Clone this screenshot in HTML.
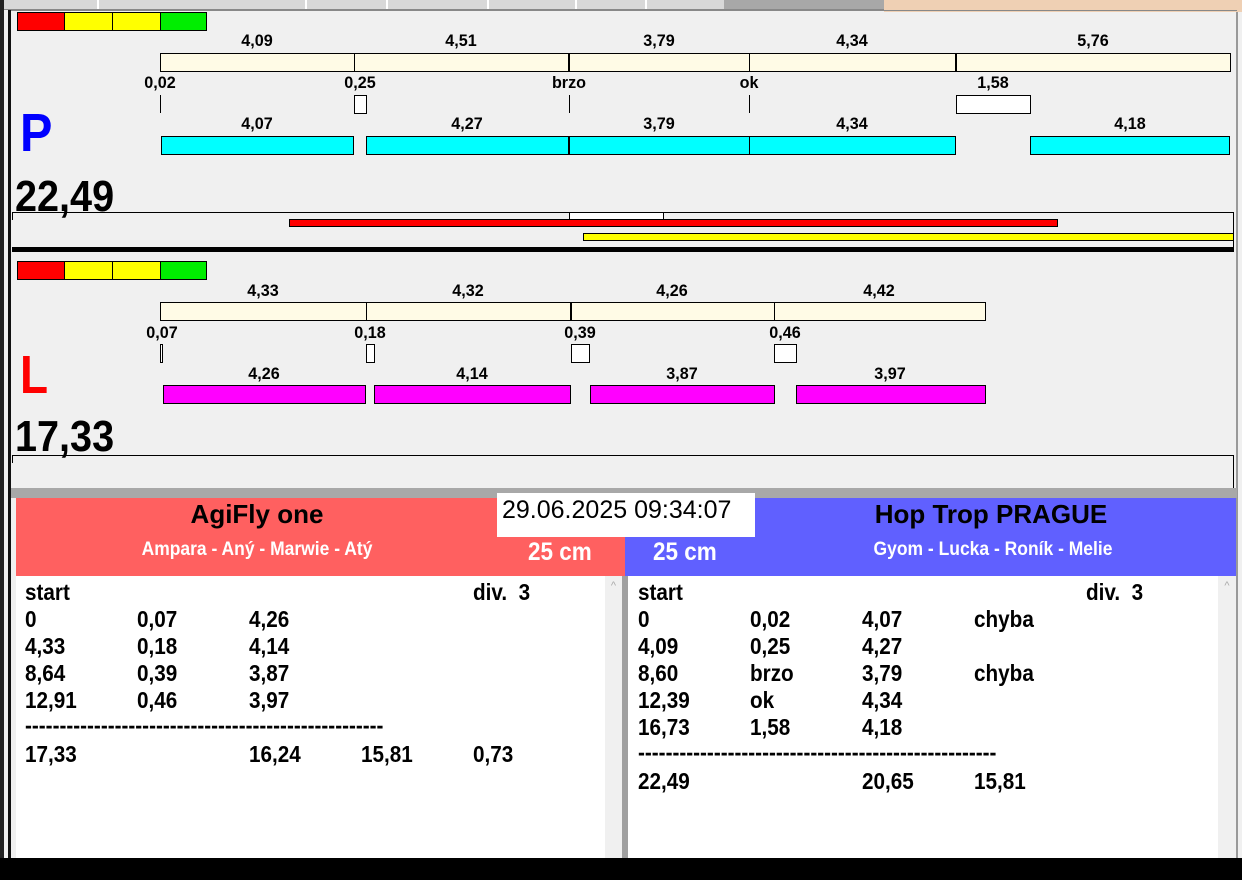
<!DOCTYPE html>
<html><head><meta charset="utf-8"><style>
*{margin:0;padding:0;box-sizing:border-box}
body{width:1242px;height:880px;background:#f0f0f0;position:relative;overflow:hidden;font-family:"Liberation Sans",sans-serif}
.a{position:absolute}
.b{position:absolute;border:1px solid #000}
.t{position:absolute;font-weight:bold;white-space:nowrap;line-height:1;transform:scaleX(.9);transform-origin:left top;color:#000}
.c{position:absolute;font-weight:bold;white-space:nowrap;line-height:1;width:100px;margin-left:-50px;text-align:center;font-size:17px;transform:scaleX(.95)}
.r{font-size:23px}
</style></head><body>
<div class="a" style="left:0;top:0;width:884px;height:10px;background:#d8d8d8;border-bottom:1px solid #888"></div>
<div class="a" style="left:884px;top:0;width:358px;height:12px;background:#efd0b4"></div>
<div class="a" style="left:97px;top:0;width:2px;height:9px;background:#fff"></div>
<div class="a" style="left:305px;top:0;width:2px;height:9px;background:#fff"></div>
<div class="a" style="left:386px;top:0;width:2px;height:9px;background:#fff"></div>
<div class="a" style="left:487px;top:0;width:2px;height:9px;background:#fff"></div>
<div class="a" style="left:575px;top:0;width:2px;height:9px;background:#fff"></div>
<div class="a" style="left:645px;top:0;width:2px;height:9px;background:#fff"></div>
<div class="a" style="left:724px;top:0;width:160px;height:9px;background:#a8a8a8"></div>
<div class="a" style="left:0;top:0;width:4px;height:880px;background:#222"></div>
<div class="a" style="left:8px;top:10px;width:3px;height:850px;background:#111"></div>
<div class="a" style="left:11px;top:10px;width:1226px;height:1px;background:#888"></div>
<div class="a" style="left:1236px;top:12px;width:2px;height:848px;background:#999"></div>

<div class="b" style="left:17px;top:12px;width:48px;height:19px;background:#f00"></div>
<div class="b" style="left:64px;top:12px;width:49px;height:19px;background:#ff0"></div>
<div class="b" style="left:112px;top:12px;width:49px;height:19px;background:#ff0"></div>
<div class="b" style="left:160px;top:12px;width:47px;height:19px;background:#0e0"></div>

<div class="c" style="left:257px;top:32px">4,09</div>
<div class="c" style="left:461px;top:32px">4,51</div>
<div class="c" style="left:659px;top:32px">3,79</div>
<div class="c" style="left:852px;top:32px">4,34</div>
<div class="c" style="left:1093px;top:32px">5,76</div>
<div class="b" style="left:160px;top:53px;width:1071px;height:19px;background:#fffbe6"></div>
<div class="a" style="left:354px;top:53px;width:1px;height:19px;background:#000"></div>
<div class="a" style="left:568px;top:53px;width:2px;height:19px;background:#000"></div>
<div class="a" style="left:749px;top:53px;width:1px;height:19px;background:#000"></div>
<div class="a" style="left:955px;top:53px;width:2px;height:19px;background:#000"></div>
<div class="c" style="left:160px;top:74px">0,02</div>
<div class="c" style="left:360px;top:74px">0,25</div>
<div class="c" style="left:569px;top:74px">brzo</div>
<div class="c" style="left:749px;top:74px">ok</div>
<div class="c" style="left:993px;top:74px">1,58</div>
<div class="a" style="left:160px;top:95px;width:1px;height:18px;background:#000"></div>
<div class="b" style="left:354px;top:95px;width:13px;height:19px;background:#fff"></div>
<div class="a" style="left:569px;top:95px;width:1px;height:18px;background:#000"></div>
<div class="a" style="left:749px;top:95px;width:1px;height:18px;background:#000"></div>
<div class="b" style="left:956px;top:95px;width:75px;height:19px;background:#fff"></div>
<div class="c" style="left:257px;top:115px">4,07</div>
<div class="c" style="left:467px;top:115px">4,27</div>
<div class="c" style="left:659px;top:115px">3,79</div>
<div class="c" style="left:852px;top:115px">4,34</div>
<div class="c" style="left:1130px;top:115px">4,18</div>
<div class="b" style="left:161px;top:136px;width:193px;height:19px;background:#00ffff"></div>
<div class="b" style="left:366px;top:136px;width:590px;height:19px;background:#00ffff"></div>
<div class="a" style="left:568px;top:136px;width:2px;height:19px;background:#000"></div>
<div class="a" style="left:749px;top:136px;width:1px;height:19px;background:#000"></div>
<div class="b" style="left:1030px;top:136px;width:200px;height:19px;background:#00ffff"></div>
<div class="a" style="left:20px;top:106px;font-weight:bold;font-size:54px;line-height:1;color:#00f;transform:scaleX(.9);transform-origin:left top">P</div>
<div class="t" style="left:15px;top:175px;font-size:44px">22,49</div>
<div class="a" style="left:12px;top:212px;width:1222px;height:1px;background:#000"></div>
<div class="a" style="left:12px;top:212px;width:1px;height:8px;background:#000"></div>
<div class="a" style="left:1233px;top:212px;width:1px;height:38px;background:#000"></div>
<div class="b" style="left:569px;top:212px;width:95px;height:8px;background:#fff"></div>
<div class="b" style="left:289px;top:219px;width:769px;height:8px;background:#f00"></div>
<div class="b" style="left:583px;top:233px;width:651px;height:8px;background:#ff0"></div>
<div class="a" style="left:12px;top:247px;width:1222px;height:5px;background:#000"></div>

<div class="b" style="left:17px;top:261px;width:48px;height:19px;background:#f00"></div>
<div class="b" style="left:64px;top:261px;width:49px;height:19px;background:#ff0"></div>
<div class="b" style="left:112px;top:261px;width:49px;height:19px;background:#ff0"></div>
<div class="b" style="left:160px;top:261px;width:47px;height:19px;background:#0e0"></div>
<div class="c" style="left:263px;top:282px">4,33</div>
<div class="c" style="left:468px;top:282px">4,32</div>
<div class="c" style="left:672px;top:282px">4,26</div>
<div class="c" style="left:879px;top:282px">4,42</div>
<div class="b" style="left:160px;top:302px;width:826px;height:19px;background:#fffbe6"></div>
<div class="a" style="left:366px;top:302px;width:1px;height:19px;background:#000"></div>
<div class="a" style="left:570px;top:302px;width:2px;height:19px;background:#000"></div>
<div class="a" style="left:774px;top:302px;width:1px;height:19px;background:#000"></div>
<div class="c" style="left:162px;top:324px">0,07</div>
<div class="c" style="left:370px;top:324px">0,18</div>
<div class="c" style="left:580px;top:324px">0,39</div>
<div class="c" style="left:785px;top:324px">0,46</div>
<div class="b" style="left:160px;top:344px;width:3px;height:19px;background:#fff"></div>
<div class="b" style="left:366px;top:344px;width:9px;height:19px;background:#fff"></div>
<div class="b" style="left:571px;top:344px;width:19px;height:19px;background:#fff"></div>
<div class="b" style="left:774px;top:344px;width:23px;height:19px;background:#fff"></div>
<div class="c" style="left:264px;top:365px">4,26</div>
<div class="c" style="left:472px;top:365px">4,14</div>
<div class="c" style="left:682px;top:365px">3,87</div>
<div class="c" style="left:890px;top:365px">3,97</div>
<div class="b" style="left:163px;top:385px;width:203px;height:19px;background:#ff00ff"></div>
<div class="b" style="left:374px;top:385px;width:197px;height:19px;background:#ff00ff"></div>
<div class="b" style="left:590px;top:385px;width:185px;height:19px;background:#ff00ff"></div>
<div class="b" style="left:796px;top:385px;width:190px;height:19px;background:#ff00ff"></div>
<div class="a" style="left:20px;top:348px;font-weight:bold;font-size:54px;line-height:1;color:#f00;transform:scaleX(.85);transform-origin:left top">L</div>
<div class="t" style="left:15px;top:415px;font-size:44px">17,33</div>
<div class="a" style="left:12px;top:455px;width:1222px;height:1px;background:#000"></div>
<div class="a" style="left:12px;top:455px;width:1px;height:8px;background:#000"></div>
<div class="a" style="left:1233px;top:455px;width:1px;height:33px;background:#000"></div>

<div class="a" style="left:11px;top:488px;width:1226px;height:10px;background:#a8a8a8"></div>
<div class="a" style="left:16px;top:498px;width:609px;height:78px;background:#ff6060"></div>
<div class="a" style="left:625px;top:498px;width:611px;height:78px;background:#6060ff"></div>
<div class="a" style="left:497px;top:493px;width:258px;height:44px;background:#fff"></div>
<div class="a" style="left:502px;top:498px;font-size:25px;line-height:1">29.06.2025 09:34:07</div>
<div class="a" style="left:57px;top:501px;width:400px;text-align:center;font-weight:bold;font-size:26px;line-height:1">AgiFly one</div>
<div class="a" style="left:57px;top:540px;width:400px;text-align:center;font-weight:bold;font-size:19px;line-height:1;color:#fff;transform:scaleX(.92)">Ampara - Aný - Marwie - Atý</div>
<div class="t" style="left:528px;top:540px;font-size:25px;color:#fff">25 cm</div>
<div class="t" style="left:653px;top:540px;font-size:25px;color:#fff">25 cm</div>
<div class="a" style="left:791px;top:501px;width:400px;text-align:center;font-weight:bold;font-size:26px;line-height:1">Hop Trop PRAGUE</div>
<div class="a" style="left:793px;top:540px;width:400px;text-align:center;font-weight:bold;font-size:19px;line-height:1;color:#fff;transform:scaleX(.92)">Gyom - Lucka - Roník - Melie</div>

<div class="a" style="left:16px;top:576px;width:589px;height:282px;background:#fff"></div>
<div class="a" style="left:605px;top:576px;width:17px;height:282px;background:#f0f0f0;color:#aaa;font-size:11px;text-align:center;padding-top:4px">^</div>
<div class="a" style="left:622px;top:576px;width:6px;height:282px;background:#a0a0a0"></div>
<div class="a" style="left:628px;top:576px;width:590px;height:282px;background:#fff"></div>
<div class="a" style="left:1218px;top:576px;width:18px;height:282px;background:#f0f0f0;color:#aaa;font-size:11px;text-align:center;padding-top:4px">^</div>

<div class="t r" style="left:25px;top:581px">start</div><div class="t r" style="left:473px;top:581px">div.&nbsp; 3</div>
<div class="t r" style="left:25px;top:608px">0</div><div class="t r" style="left:137px;top:608px">0,07</div><div class="t r" style="left:249px;top:608px">4,26</div>
<div class="t r" style="left:25px;top:635px">4,33</div><div class="t r" style="left:137px;top:635px">0,18</div><div class="t r" style="left:249px;top:635px">4,14</div>
<div class="t r" style="left:25px;top:662px">8,64</div><div class="t r" style="left:137px;top:662px">0,39</div><div class="t r" style="left:249px;top:662px">3,87</div>
<div class="t r" style="left:25px;top:689px">12,91</div><div class="t r" style="left:137px;top:689px">0,46</div><div class="t r" style="left:249px;top:689px">3,97</div>
<div class="t r" style="left:25px;top:714px">----------------------------------------------------</div>
<div class="t r" style="left:25px;top:743px">17,33</div><div class="t r" style="left:249px;top:743px">16,24</div><div class="t r" style="left:361px;top:743px">15,81</div><div class="t r" style="left:473px;top:743px">0,73</div>

<div class="t r" style="left:638px;top:581px">start</div><div class="t r" style="left:1086px;top:581px">div.&nbsp; 3</div>
<div class="t r" style="left:638px;top:608px">0</div><div class="t r" style="left:750px;top:608px">0,02</div><div class="t r" style="left:862px;top:608px">4,07</div><div class="t r" style="left:974px;top:608px">chyba</div>
<div class="t r" style="left:638px;top:635px">4,09</div><div class="t r" style="left:750px;top:635px">0,25</div><div class="t r" style="left:862px;top:635px">4,27</div>
<div class="t r" style="left:638px;top:662px">8,60</div><div class="t r" style="left:750px;top:662px">brzo</div><div class="t r" style="left:862px;top:662px">3,79</div><div class="t r" style="left:974px;top:662px">chyba</div>
<div class="t r" style="left:638px;top:689px">12,39</div><div class="t r" style="left:750px;top:689px">ok</div><div class="t r" style="left:862px;top:689px">4,34</div>
<div class="t r" style="left:638px;top:716px">16,73</div><div class="t r" style="left:750px;top:716px">1,58</div><div class="t r" style="left:862px;top:716px">4,18</div>
<div class="t r" style="left:638px;top:741px">----------------------------------------------------</div>
<div class="t r" style="left:638px;top:770px">22,49</div><div class="t r" style="left:862px;top:770px">20,65</div><div class="t r" style="left:974px;top:770px">15,81</div>

<div class="a" style="left:0;top:858px;width:1242px;height:22px;background:#000"></div>
</body></html>
